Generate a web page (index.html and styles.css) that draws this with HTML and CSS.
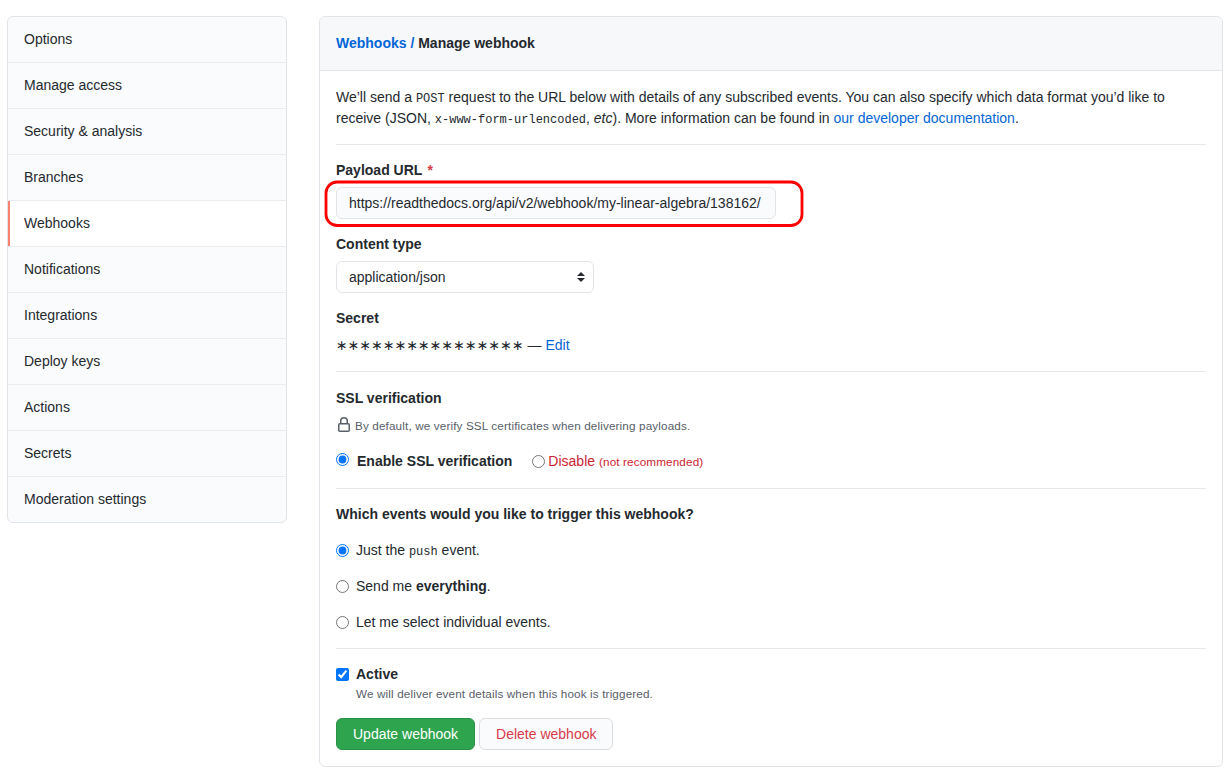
FILE: index.html
```html
<!DOCTYPE html>
<html lang="en">
<head>
<meta charset="utf-8">
<title>Manage webhook</title>
<link rel="stylesheet" href="styles.css">
</head>
<body>
<div class="layout">
  <nav class="menu">
    <a class="menu-item">Options</a>
    <a class="menu-item">Manage access</a>
    <a class="menu-item">Security &amp; analysis</a>
    <a class="menu-item">Branches</a>
    <a class="menu-item selected">Webhooks</a>
    <a class="menu-item">Notifications</a>
    <a class="menu-item">Integrations</a>
    <a class="menu-item">Deploy keys</a>
    <a class="menu-item">Actions</a>
    <a class="menu-item">Secrets</a>
    <a class="menu-item">Moderation settings</a>
  </nav>
  <main class="box">
    <h1 class="box-header"><a class="link">Webhooks /</a> Manage webhook</h1>
    <form class="box-body">
      <p class="intro">We’ll send a <code>POST</code> request to the URL below with details of any subscribed events. You can also specify which data format you’d like to receive (JSON, <code>x-www-form-urlencoded</code>, <em>etc</em>). More information can be found in <a class="link">our developer documentation</a>.</p>
      <section class="section">
        <div class="field">
          <label class="label">Payload URL <span class="required">*</span></label>
          <div class="url-wrap">
            <input class="control url" type="text" value="https://readthedocs.org/api/v2/webhook/my-linear-algebra/138162/">
            <svg class="highlight" width="480" height="48" viewBox="0 0 480 48"><rect x="2" y="2" width="476" height="43.5" rx="11"/></svg>
          </div>
        </div>
        <div class="field">
          <label class="label">Content type</label>
          <div class="control select">
            <span>application/json</span>
            <svg class="arrows" width="8" height="10" viewBox="0 0 8 10"><path d="M4 0l4 4H0zM4 10L0 6h8z"/></svg>
          </div>
        </div>
        <div class="field">
          <label class="label">Secret</label>
          <div class="secret"><span class="stars">∗∗∗∗∗∗∗∗∗∗∗∗∗∗∗∗</span> — <a class="link">Edit</a></div>
        </div>
      </section>
      <section class="section ssl">
        <div class="label">SSL verification</div>
        <div class="ssl-note">
          <svg class="lock" width="16" height="16" viewBox="0 0 16 16"><path fill-rule="evenodd" d="M4 4v2h-.25A1.75 1.75 0 002 7.75v5.5c0 .966.784 1.75 1.75 1.75h8.5A1.75 1.75 0 0014 13.25v-5.5A1.75 1.75 0 0012.25 6H12V4a4 4 0 10-8 0zm6.5 2V4a2.5 2.5 0 10-5 0v2h5zM12 7.5h.25a.25.25 0 01.25.25v5.5a.25.25 0 01-.25.25h-8.5a.25.25 0 01-.25-.25v-5.5a.25.25 0 01.25-.25H12z"/></svg>
          <span class="note">By default, we verify SSL certificates when delivering payloads.</span>
        </div>
        <div class="ssl-options">
          <label class="option enable"><input type="radio" name="ssl" checked><b>Enable SSL verification</b></label>
          <label class="option disable"><input type="radio" name="ssl"><span>Disable <small>(not recommended)</small></span></label>
        </div>
      </section>
      <section class="section events">
        <div class="label">Which events would you like to trigger this webhook?</div>
        <label class="option"><input type="radio" name="ev" checked><span>Just the <code>push</code> event.</span></label>
        <label class="option"><input type="radio" name="ev"><span>Send me <b>everything</b>.</span></label>
        <label class="option"><input type="radio" name="ev"><span>Let me select individual events.</span></label>
      </section>
      <section class="section active">
        <label class="option"><input type="checkbox" checked><b>Active</b></label>
        <p class="note active-note">We will deliver event details when this hook is triggered.</p>
        <div class="actions">
          <button type="button" class="btn primary">Update webhook</button>
          <button type="button" class="btn danger">Delete webhook</button>
        </div>
      </section>
    </form>
  </main>
</div>
</body>
</html>
```
FILE: styles.css
```css
* { box-sizing: border-box; }
body {
  margin: 0;
  background: #fff;
  color: #24292e;
  font: 14px/21px "Liberation Sans", Arial, sans-serif;
}
.layout {
  display: flex;
  align-items: flex-start;
  gap: 32px;
  padding: 16px 6px 4px 7px;
}
.menu {
  width: 280px;
  flex: none;
  border: 1px solid #e1e4e8;
  border-radius: 6px;
  overflow: hidden;
  background: #fafbfc;
}
.menu-item {
  display: block;
  padding: 12px 16px;
  border-bottom: 1px solid #eaecef;
}
.menu-item:last-child { border-bottom: 0; }
.menu-item.selected {
  background: #fff;
  box-shadow: inset 2px 0 0 #f9826c;
}
.box {
  flex: 1;
  border: 1px solid #e1e4e8;
  border-radius: 6px;
}
.box-header {
  margin: 0;
  padding: 16px;
  font-size: 14px;
  line-height: 21px;
  background: #f6f8fa;
  border-bottom: 1px solid #e1e4e8;
  border-radius: 5px 5px 0 0;
}
.box-body { padding: 16px; }
.link { color: #0366d6; }
code { font: 12px "Liberation Mono", monospace; }
.intro { margin: 0 0 15px; }
.section {
  border-top: 1px solid #e6e9ec;
  padding: 15px 0;
}
.field + .field { margin-top: 15px; }
.label { display: block; font-weight: 600; }
.required { color: #d73a49; margin-left: 1.5px; }
.control {
  display: block;
  height: 32px;
  margin-top: 6px;
  padding: 0 12px;
  border: 1px solid #e1e4e8;
  border-radius: 6px;
  color: #24292e;
  font: 14px/20px "Liberation Sans", Arial, sans-serif;
}
.url-wrap { position: relative; }
.url { width: 440px; background: #fafbfc; }
.highlight {
  position: absolute;
  left: -12px;
  top: -7px;
  fill: none;
  stroke: #f00;
  stroke-width: 2.8px;
  pointer-events: none;
}
.select {
  display: flex;
  align-items: center;
  justify-content: space-between;
  width: 258px;
  padding-right: 8px;
}
.arrows { fill: #24292e; }
.secret { height: 21px; margin-top: 6px; }
.stars { font-family: "DejaVu Sans", sans-serif; }
.ssl { padding: 16px 0; }
.ssl-note {
  display: flex;
  align-items: center;
  height: 21px;
  margin-top: 6px;
}
.lock { fill: #586069; margin-bottom: 1px; }
.note,
.disable small {
  font-size: 11.7px;
  letter-spacing: 0.14px;
}
.note { color: #586069; line-height: 18px; }
.ssl-note .note { margin-left: 3px; }
.ssl-options { display: flex; gap: 20px; margin-top: 15px; }
.option { display: flex; align-items: center; height: 21px; }
.option input { width: 13px; height: 13px; margin: 0 7px 1px 0; }
.enable input { margin: 0 8px 4px 0; }
.disable { color: #cb2431; }
.disable input { margin: 0 3px 0 0; }
.events .option { margin-top: 15px; }
.active { padding-bottom: 0; }
.active-note { margin: 0 0 0 20px; }
.actions { display: flex; gap: 4px; margin-top: 15px; }
.btn {
  height: 32px;
  padding: 0 16px;
  border: 1px solid #dadde0;
  border-radius: 6px;
  background: #fafbfc;
  font: 14px/20px "Liberation Sans", Arial, sans-serif;
}
.primary { background: #2ea44f; border-color: #2a9147; color: #fff; }
.danger { color: #d73a49; }
```
